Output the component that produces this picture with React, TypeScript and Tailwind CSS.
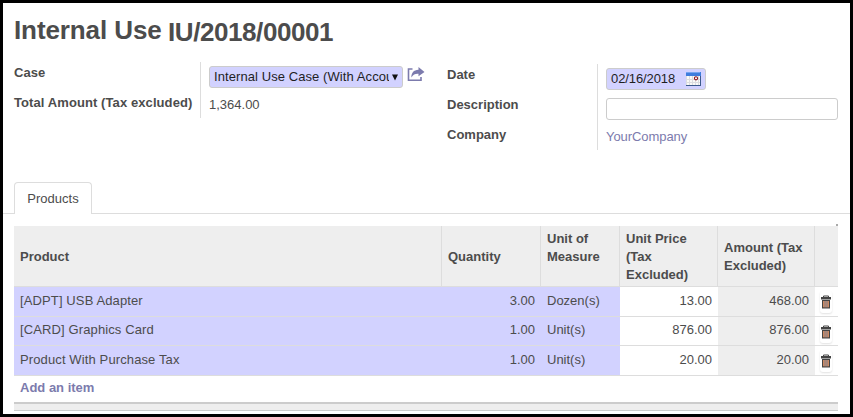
import React from "react";

const rows = [
  { product: "[ADPT] USB Adapter", qty: "3.00", uom: "Dozen(s)", price: "13.00", amount: "468.00", height: "h-[30px]", text: "pt-[5px]" },
  { product: "[CARD] Graphics Card", qty: "1.00", uom: "Unit(s)", price: "876.00", amount: "876.00", height: "h-[29px]", text: "pt-[4px]" },
  { product: "Product With Purchase Tax", qty: "1.00", uom: "Unit(s)", price: "20.00", amount: "20.00", height: "h-[30px]", text: "pt-[5px]" },
];

function ShareIcon() {
  return (
    <svg className="ml-1 mt-px h-[15px] w-[18px]" viewBox="0 0 18 15" fill="none">
      <path d="M5.5 2H1.5V13.3H14V10" stroke="#7c7bad" strokeWidth="1.6" />
      <path d="M11.5 0L17.5 5L11.5 9.3V6.8C8 6.6 6.3 7.6 4.4 10.4C4.3 6 6.5 2.9 11.5 2.7Z" fill="#7c7bad" />
    </svg>
  );
}

function CalendarIcon() {
  return (
    <svg className="h-[14px] w-[15px]" viewBox="0 0 15 14">
      <rect width="15" height="14" fill="#3c5a8c" />
      <rect width="14" height="13" fill="#fafaf7" />
      <rect width="15" height="4" fill="#3f7ddd" />
      <rect width="14" height="1" fill="#76a5f0" />
      <path d="M.5 4V13M0 7.5H14M0 10.5H14M3.5 4V13M6.5 4V13M9.5 4V13M12.5 4V13" stroke="#dcdde0" />
      <circle cx="10" cy="6.3" r="1.6" fill="#fff" stroke="#8d1520" strokeWidth="1.1" />
    </svg>
  );
}

function TrashIcon() {
  return (
    <svg className="h-[14px] w-[10px]" viewBox="0 0 10 14">
      <path d="M2.5 2.5V1H7.5V2.5" fill="none" stroke="#444" strokeWidth="1" />
      <path d="M0 2H10V4.5H0Z" fill="#444" />
      <path d="M1 5H9V13.5H1Z" fill="#444" />
      <path d="M2 6H8V12.3H2Z" fill="#cf8a62" />
      <path d="M4 6V12.3M6 6V12.3" stroke="#7a8194" strokeWidth=".9" />
    </svg>
  );
}

export default function App() {
  return (
    <div className="flex h-[417px] w-[853px] flex-col overflow-hidden border-[3px] border-black bg-white font-['Liberation_Sans',Arial,sans-serif] text-[13px] leading-[18px] text-[#4c4c4c]">
      <h1 className="flex h-[59px] shrink-0 pl-[11px] text-[26px] font-bold leading-[30px]">
        <span className="w-[154px] whitespace-nowrap pt-[12px] tracking-[-0.1px]">Internal Use</span>
        <span className="whitespace-nowrap pt-[14px] tracking-[-0.42px]">IU/2018/00001</span>
      </h1>

      <div className="flex h-[120px] shrink-0 pl-[11px]">
        <div className="flex w-[433px]">
          <div className="w-[186px] whitespace-nowrap font-bold tracking-[0.09px]">
            <div className="h-[30px] pt-[2px]">Case</div>
            <div className="pt-[2px]">Total Amount (Tax excluded)</div>
          </div>
          <div className="h-[56px] border-l border-[#ddd] pl-[8px]">
            <div className="flex pt-[4px]">
              <div className="flex h-[22px] w-[194px] items-center rounded-[3px] border border-[#ccc] bg-[#d2d2ff] pl-[4px] text-[#1f1f1f]">
                <span className="w-[175px] overflow-hidden whitespace-nowrap tracking-[0.08px]">Internal Use Case (With Accou</span>
                <svg className="ml-[3px] mt-px h-[7px] w-[6px]" viewBox="0 0 6 7"><path d="M0 .5H6L3 6.5Z" fill="#111" /></svg>
              </div>
              <ShareIcon />
            </div>
            <div className="pt-[8px]">1,364.00</div>
          </div>
        </div>
        <div className="flex pt-[2px]">
          <div className="w-[150px] font-bold">
            <div className="h-[30px] pt-[2px]">Date</div>
            <div className="h-[30px] pt-[2px]">Description</div>
            <div className="pt-[2px]">Company</div>
          </div>
          <div className="h-[86px] border-l border-[#ddd] pl-[8px]">
            <div className="mt-[4px] flex h-[22px] w-[100px] items-center justify-between rounded-[3px] border border-[#ccc] bg-[#d2d2ff] px-[4px] text-[#1f1f1f]">
              <span className="tracking-[-0.1px]">02/16/2018</span>
              <CalendarIcon />
            </div>
            <div className="mt-[8px] h-[22px] w-[232px] rounded-[3px] border border-[#ccc] bg-white" />
            <div className="mt-[8px] tracking-[-0.07px] text-[#7c7bad]">YourCompany</div>
          </div>
        </div>
      </div>

      <div className="flex h-[32px] shrink-0">
        <div className="w-[11px] border-b border-[#ddd]" />
        <div className="flex w-[78px] justify-center rounded-t-[4px] border border-b-0 border-[#ddd] pt-[7px]">Products</div>
        <div className="flex-1 border-b border-[#ddd]" />
      </div>

      <div className="flex h-[12px] w-[835px] shrink-0 items-start justify-end pt-[10px]"><div className="h-[2px] w-[2px] bg-[#aaa]" /></div>

      <div className="ml-[11px] flex w-[824px] flex-col">
        <div className="flex h-[61px] items-center border-b border-[#ddd] bg-[#eee] font-bold">
          <div className="h-full w-[428px] border-r border-[#ddd] pl-[6px] pt-[22px]">Product</div>
          <div className="h-full w-[99px] border-r border-[#ddd] pl-[6px] pt-[22px]">Quantity</div>
          <div className="h-full w-[79px] border-r border-[#ddd] pl-[6px] pt-[4px]">Unit of<br />Measure</div>
          <div className="h-full w-[98px] border-r border-[#ddd] pl-[6px] pt-[4px]">Unit Price<br />(Tax<br />Excluded)</div>
          <div className="h-full w-[97px] border-r border-[#ddd] pl-[6px] pt-[13px]">Amount (Tax<br />Excluded)</div>
        </div>
        {rows.map((r) => (
          <div key={r.product} className={`flex border-b border-[#ddd] ${r.height}`}>
            <div className={`w-[428px] bg-[#d2d2ff] pl-[6px] tracking-[0.12px] ${r.text}`}>{r.product}</div>
            <div className={`w-[99px] bg-[#d2d2ff] pr-[6px] text-right ${r.text}`}>{r.qty}</div>
            <div className={`w-[79px] bg-[#d2d2ff] pl-[6px] ${r.text}`}>{r.uom}</div>
            <div className={`w-[98px] pr-[6px] text-right ${r.text}`}>{r.price}</div>
            <div className={`w-[97px] bg-[#eee] pr-[6px] text-right ${r.text}`}>{r.amount}</div>
            <div className="flex w-[22px] items-start justify-center pt-[4px]">
              <div className="flex h-[22px] w-[12px] items-center justify-center rounded-[3px] shadow-[0_1px_2px_rgba(0,0,0,0.12)]"><TrashIcon /></div>
            </div>
          </div>
        ))}
        <div className="h-[26px] pl-[6px] pt-[3px] font-bold text-[#7c7bad]">Add an item</div>
        <div className="h-[9px] border-b border-t-2 border-[#ccc] bg-[#eee]" />
      </div>
    </div>
  );
}
